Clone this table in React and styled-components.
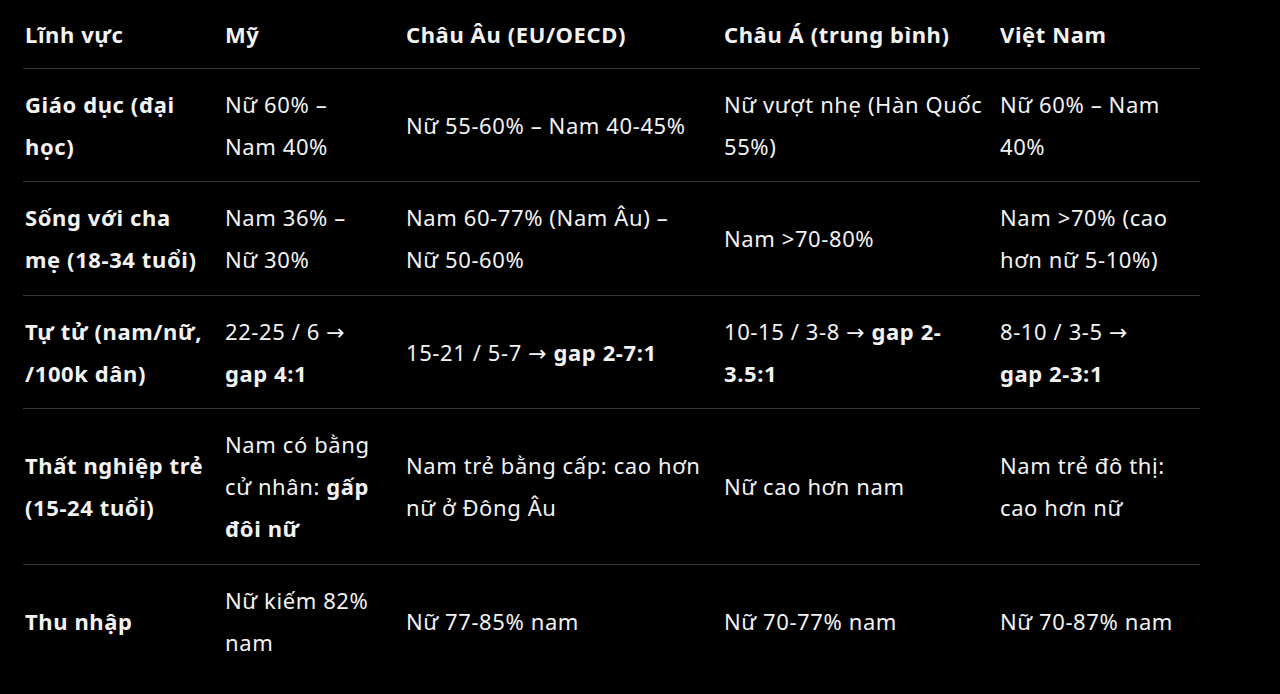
import React from "react";
import styled, { createGlobalStyle } from "styled-components";

const GlobalStyle = createGlobalStyle`
  html, body {
    margin: 0;
    padding: 0;
    background: #000;
  }
  body {
    font-family: "Noto Sans", "Open Sans", "DejaVu Sans", sans-serif;
    color: #f2f2f2;
  }
`;

const Keep = styled.b`
  font-weight: 700;
  white-space: nowrap;
`;

// width of each column and the room kept free on its right
const columns = [
  { width: 200, pad: 16 },
  { width: 181, pad: 29 },
  { width: 318, pad: 10 },
  { width: 276, pad: 14 },
  { width: 202, pad: 20 },
];

const headers = ["Lĩnh vực", "Mỹ", "Châu Âu (EU/OECD)", "Châu Á (trung bình)", "Việt Nam"];

const rows = [
  ["Giáo dục (đại học)", "Nữ 60% – Nam 40%", "Nữ 55-60% – Nam 40-45%", "Nữ vượt nhẹ (Hàn Quốc 55%)", "Nữ 60% – Nam 40%"],
  ["Sống với cha mẹ (18-34 tuổi)", "Nam 36% – Nữ 30%", "Nam 60-77% (Nam Âu) – Nữ\u00a050-60%", "Nam >70-80%", "Nam >70% (cao hơn nữ 5-10%)"],
  [
    "Tự tử (nam/nữ, /100k dân)",
    <>22-25 / 6 → <b>gap 4:1</b></>,
    <>15-21 / 5-7 → <b>gap 2-7:1</b></>,
    <>10-15 / 3-8 → <b>gap 2-3.5:1</b></>,
    <>8-10 / 3-5 → <Keep>gap 2-3:1</Keep></>,
  ],
  [
    "Thất nghiệp trẻ (15-24 tuổi)",
    <>Nam có bằng cử nhân: <b>gấp đôi nữ</b></>,
    "Nam trẻ bằng cấp: cao hơn nữ ở Đông Âu",
    "Nữ cao hơn nam",
    "Nam trẻ đô thị: cao hơn nữ",
  ],
  ["Thu nhập", "Nữ kiếm 82% nam", "Nữ 77-85% nam", "Nữ 70-77% nam", "Nữ 70-87% nam"],
];

const App = () => (
  <Page>
    <GlobalStyle />
    <Table>
      <colgroup>
        {columns.map((c, i) => (
          <col key={i} style={{ width: c.width }} />
        ))}
      </colgroup>
      <thead>
        <tr>
          {headers.map((h, i) => (
            <Th key={h} $pad={columns[i].pad}>
              {h}
            </Th>
          ))}
        </tr>
      </thead>
      <tbody>
        {rows.map((r, i) => (
          <Row key={i} $last={i === rows.length - 1}>
            {r.map((c, j) => (
              <Td key={j} $bold={j === 0} $pad={columns[j].pad}>
                {c}
              </Td>
            ))}
          </Row>
        ))}
      </tbody>
    </Table>
  </Page>
);

const Page = styled.div`
  width: 1280px;
  height: 694px;
  overflow: hidden;
  background: #000;
  padding-left: 23px;
  box-sizing: border-box;
`;

const Table = styled.table`
  border-collapse: collapse;
  table-layout: fixed;
  width: 1177px;
  font-size: 22px;
  letter-spacing: 0.6px;
`;

const Th = styled.th`
  text-align: left;
  font-weight: 700;
  line-height: 42px;
  padding: 13px ${p => p.$pad}px 13px 2px;
  border-bottom: 1px solid #363636;
  vertical-align: middle;
  box-sizing: border-box;
`;

const Row = styled.tr`
  border-bottom: ${p => (p.$last ? "none" : "1px solid #363636")};
`;

const Td = styled.td`
  font-weight: ${p => (p.$bold ? 700 : 400)};
  line-height: 42px;
  padding: 14px ${p => p.$pad}px 14.4px 2px;
  vertical-align: middle;
  box-sizing: border-box;

  b {
    font-weight: 700;
  }
`;

export default App;
